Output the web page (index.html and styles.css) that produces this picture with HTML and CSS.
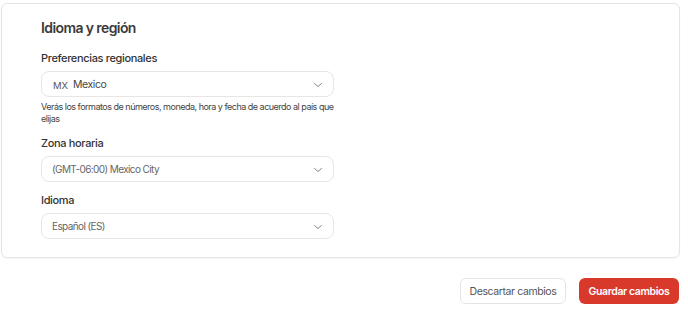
FILE: index.html
```html
<!DOCTYPE html>
<html lang="es">
<head>
<meta charset="utf-8">
<link rel="stylesheet" href="styles.css">
</head>
<body>
<section class="card">
  <h2 class="title">Idioma y región</h2>
  <div class="field">
    <label class="label">Preferencias regionales</label>
    <div class="select">
      <span class="value"><span class="code">MX</span>Mexico</span>
      <svg class="chev" width="10" height="6" viewBox="0 0 10 6"><path d="M1.5 1.5l3.5 3 3.5-3" fill="none" stroke="#888" stroke-width="1" stroke-linecap="round" stroke-linejoin="round"/></svg>
    </div>
    <p class="help">Verás los formatos de números, moneda, hora y fecha de acuerdo al país que elijas</p>
  </div>
  <div class="field">
    <label class="label">Zona horaria</label>
    <div class="select">
      <span class="value muted">(GMT-06:00) Mexico City</span>
      <svg class="chev" width="10" height="6" viewBox="0 0 10 6"><path d="M1.5 1.5l3.5 3 3.5-3" fill="none" stroke="#888" stroke-width="1" stroke-linecap="round" stroke-linejoin="round"/></svg>
    </div>
  </div>
  <div class="field">
    <label class="label">Idioma</label>
    <div class="select">
      <span class="value muted">Español (ES)</span>
      <svg class="chev" width="10" height="6" viewBox="0 0 10 6"><path d="M1.5 1.5l3.5 3 3.5-3" fill="none" stroke="#888" stroke-width="1" stroke-linecap="round" stroke-linejoin="round"/></svg>
    </div>
  </div>
</section>
<div class="actions">
  <button class="btn secondary">Descartar cambios</button>
  <button class="btn primary">Guardar cambios</button>
</div>
</body>
</html>
```
FILE: styles.css
```css
* { box-sizing: border-box; }
body {
  margin: 0;
  background: #fff;
  font-family: Inter, "Noto Sans", sans-serif;
  color: #333;
}
.card {
  margin: 3px 0 0 1px;
  width: 679px;
  height: 255px;
  border: 1px solid #e4e4e4;
  border-radius: 6px;
  box-shadow: 0 1px 2px rgba(0,0,0,0.04);
  padding: 15px 0 0 39px;
}
.title {
  margin: 0 0 14px;
  font-size: 14px;
  line-height: 18px;
  font-weight: 600;
  color: #3a3a3a;
  letter-spacing: -0.6px;
}
.field { margin-bottom: 11px; }
.label {
  display: block;
  font-size: 11px;
  line-height: 14px;
  font-weight: 500;
  color: #333;
  letter-spacing: -0.35px;
  margin-bottom: 6px;
}
.select {
  width: 293px;
  height: 26px;
  border: 1px solid #e6e6e6;
  border-radius: 8px;
  display: flex;
  align-items: center;
  justify-content: space-between;
  padding: 0 10px 0 10px;
}
.value {
  font-size: 10.5px;
  color: #444;
  letter-spacing: -0.45px;
  display: flex;
  align-items: center;
}
.value.muted { color: #666; letter-spacing: -0.6px; font-size: 10px; }
.code {
  font-size: 9.5px;
  letter-spacing: 0;
  margin: 3px 5px 0 1px;
  color: #555;
}
.chev { margin-top: 1px; }
.help {
  margin: 4px 0 0;
  width: 300px;
  font-size: 9px;
  line-height: 12px;
  color: #444;
  letter-spacing: -0.5px;
}
.actions {
  display: flex;
  justify-content: flex-end;
  gap: 13px;
  padding: 20px 9px 0 0;
}
.btn {
  height: 26px;
  border-radius: 6px;
  font-family: Inter, "Noto Sans", sans-serif;
  font-size: 10.5px;
  letter-spacing: -0.4px;
  padding: 0;
}
.secondary {
  width: 106px;
  background: #fff;
  border: 1px solid #e4e4e4;
  color: #555;
}
.primary {
  width: 100px;
  background: #d9392b;
  border: none;
  color: #fff;
  font-weight: 600;
}
```
